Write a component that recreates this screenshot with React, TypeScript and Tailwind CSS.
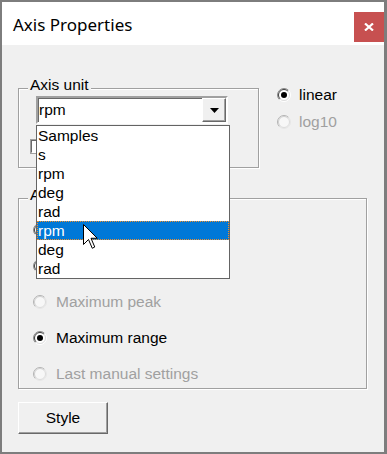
import React from "react";

const font = { fontFamily: '"Liberation Sans", Arial, sans-serif' };

function Radio({ checked = false, disabled = false }: { checked?: boolean; disabled?: boolean }) {
  const outerDark = disabled ? "#b4b4b4" : "#8a8a8a";
  const innerDark = disabled ? "#cfcfcf" : "#404040";
  return (
    <svg width="14" height="14" viewBox="0 0 14 14" className="shrink-0">
      <circle cx="7" cy="7" r="6" fill={disabled ? "#f7f7f7" : "#fff"} />
      <path d="M2.4 11.6 A6.5 6.5 0 0 1 11.6 2.4" stroke={outerDark} strokeWidth="1" fill="none" />
      <path d="M11.6 2.4 A6.5 6.5 0 0 1 2.4 11.6" stroke={disabled ? "#e6e6e6" : "#ffffff"} strokeWidth="1" fill="none" />
      <path d="M3.1 10.9 A5.5 5.5 0 0 1 10.9 3.1" stroke={innerDark} strokeWidth="1" fill="none" />
      <path d="M10.9 3.1 A5.5 5.5 0 0 1 3.1 10.9" stroke="#dcdcdc" strokeWidth="1" fill="none" />
      {checked && <circle cx="7" cy="7" r="3" fill="#000" />}
    </svg>
  );
}

function RadioRow({
  label,
  checked,
  disabled,
}: {
  label?: string;
  checked?: boolean;
  disabled?: boolean;
}) {
  return (
    <div className="h-[36px] flex items-center">
      <Radio checked={checked} disabled={disabled} />
      {label && (
        <span className={"ml-[9px] text-[15.5px] " + (disabled ? "text-[#a0a0a0]" : "text-black")}>
          {label}
        </span>
      )}
    </div>
  );
}

const units = ["Samples", "s", "rpm", "deg", "rad", "rpm", "deg", "rad"];

export default function App() {
  return (
    <div
      className="relative w-[387px] h-[454px] border-2 border-r-[3px] border-[#7d7d7d] bg-[#f0f0f0] flex flex-col overflow-hidden"
      style={font}
    >
      {/* TITLE BAR */}
      <div className="h-[43px] bg-white flex items-start justify-between shrink-0">
        <div
          className="pl-[11px] pt-[11px] leading-[24px] text-[17px] text-black"
          style={{ fontFamily: '"Noto Sans", "Open Sans", sans-serif' }}
        >
          Axis Properties
        </div>
        <div className="w-[30px] h-[30px] mt-[10px] bg-[#c75050] flex items-center justify-center">
          <svg width="10" height="8" viewBox="0 0 10 8">
            <path d="M1 0.5 L9 7.5 M9 0.5 L1 7.5" stroke="#fff" strokeWidth="2.2" />
          </svg>
        </div>
      </div>

      {/* BODY */}
      <div className="flex-1 pl-[16px] pt-[43px]">
        <div className="flex items-start">
          {/* AXIS UNIT GROUP */}
          <div className="relative w-[241px] h-[80px] border border-[#a0a0a0] shadow-[inset_1px_1px_0_#fff,1px_1px_0_#fff] pl-[12px] pt-[7px]">
            <span className="absolute -top-[13px] left-[9px] px-[2px] bg-[#f0f0f0] leading-[18px] text-[15.5px] text-black">
              Axis unit
            </span>

            <div className="relative w-[192px] ml-[5px]">
              <div className="h-[28px] flex items-center bg-white border-2 border-t-[#a0a0a0] border-l-[#a0a0a0] border-b-white border-r-white shadow-[inset_1px_1px_0_#696969]">
                <span className="flex-1 pl-[1px] text-[15.5px] leading-[20px]">rpm</span>
                <div className="w-[24px] h-[24px] bg-[#f0f0f0] border border-t-white border-l-white border-b-[#696969] border-r-[#696969] shadow-[inset_-1px_-1px_0_#a0a0a0] flex items-center justify-center">
                  <svg width="9" height="5" viewBox="0 0 9 5">
                    <path d="M0 0 H9 L4.5 5 Z" fill="#000" />
                  </svg>
                </div>
              </div>

              {/* OPEN LIST */}
              <div className="absolute left-0 top-[29px] w-[194px] border border-[#646464] bg-white z-10">
                {units.map((u, i) => (
                  <div
                    key={i}
                    className={
                      "h-[19px] leading-[19px] pl-[1px] text-[15.5px] " +
                      (i === 5
                        ? "bg-[#0078d7] text-white outline outline-1 outline-dotted outline-[#f0902c] -outline-offset-1"
                        : "text-black")
                    }
                  >
                    {u}
                  </div>
                ))}
                <svg
                  className="absolute left-[46px] top-[98px]"
                  width="16"
                  height="26"
                  viewBox="0 0 16 26"
                >
                  <path
                    d="M0.5 0.5 L0.5 20.5 L5.5 15.5 L9.25 24.25 L11.75 23 L8 14.25 L14.25 14.25 Z"
                    fill="#fff"
                    stroke="#000"
                    strokeWidth="1"
                    strokeLinejoin="miter"
                  />
                </svg>
              </div>
            </div>

            <div className="flex items-center mt-[16px]">
              <span className="w-[13px] h-[13px] bg-white border border-t-[#696969] border-l-[#696969] border-b-white border-r-white shadow-[0_0_0_1px_#a0a0a0]" />
            </div>
          </div>

          {/* SCALE RADIOS */}
          <div className="ml-[18px] -mt-[3px] flex flex-col gap-[7px]">
            <div className="h-[20px] flex items-center">
              <Radio checked />
              <span className="ml-[8px] text-[15.5px] text-black">linear</span>
            </div>
            <div className="h-[20px] flex items-center">
              <Radio disabled />
              <span className="ml-[8px] text-[15.5px] text-[#a0a0a0]">log10</span>
            </div>
          </div>
        </div>

        {/* AXIS RANGE GROUP */}
        <div className="relative mt-[30px] w-[349px] h-[191px] border border-[#a0a0a0] shadow-[inset_1px_1px_0_#fff,1px_1px_0_#fff] pl-[14px] pt-[13px]">
          <span className="absolute -top-[13px] left-[9px] px-[2px] bg-[#f0f0f0] leading-[18px] text-[15.5px] text-black">
            A
          </span>
          <RadioRow />
          <RadioRow />
          <RadioRow label="Maximum peak" disabled />
          <RadioRow label="Maximum range" checked />
          <RadioRow label="Last manual settings" disabled />
        </div>

        <button className="mt-[13px] w-[90px] h-[32px] bg-[#f0f0f0] border border-t-white border-l-white border-b-[#696969] border-r-[#696969] shadow-[inset_-1px_-1px_0_#a0a0a0] text-[15.5px] text-black">
          Style
        </button>
      </div>
    </div>
  );
}
